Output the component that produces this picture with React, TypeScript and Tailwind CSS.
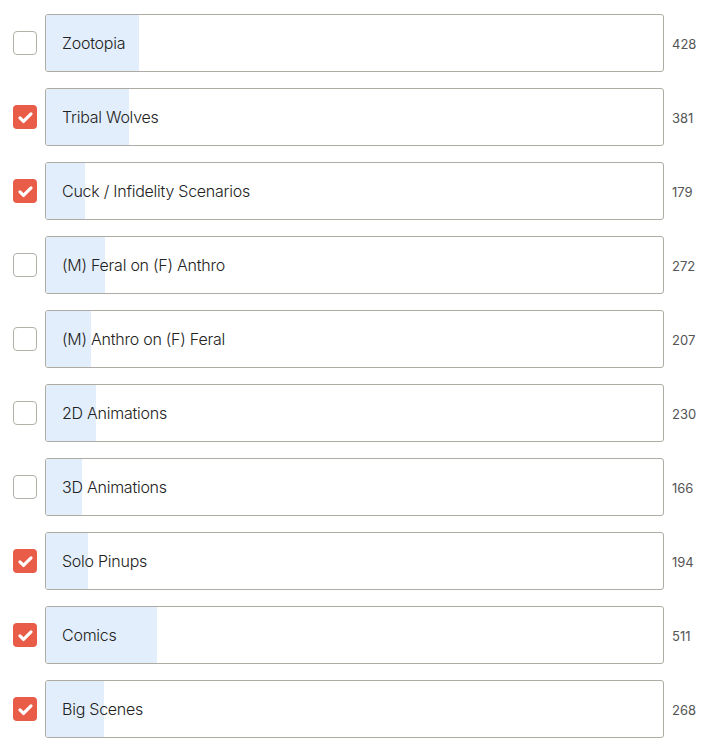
import { useState } from 'react'

type Option = {
  label: string
  count: number
  checked: boolean
}

const initialOptions: Option[] = [
  { label: 'Zootopia', count: 428, checked: false },
  { label: 'Tribal Wolves', count: 381, checked: true },
  { label: 'Cuck / Infidelity Scenarios', count: 179, checked: true },
  { label: '(M) Feral on (F) Anthro', count: 272, checked: false },
  { label: '(M) Anthro on (F) Feral', count: 207, checked: false },
  { label: '2D Animations', count: 230, checked: false },
  { label: '3D Animations', count: 166, checked: false },
  { label: 'Solo Pinups', count: 194, checked: true },
  { label: 'Comics', count: 511, checked: true },
  { label: 'Big Scenes', count: 268, checked: true },
]

function CheckBox({ checked, onClick }: { checked: boolean; onClick: () => void }) {
  return (
    <button
      type="button"
      onClick={onClick}
      className={
        checked
          ? 'size-6 shrink-0 rounded-[4px] bg-[#e95c48] flex items-center justify-center'
          : 'size-6 shrink-0 rounded-[4px] border border-[#b4b1aa] bg-white'
      }
    >
      {checked && (
        <svg viewBox="0 0 24 24" className="size-[19px]" fill="none">
          <path
            d="M5 12.5l4.5 4.5L19 7.5"
            stroke="white"
            strokeWidth="4"
            strokeLinecap="round"
            strokeLinejoin="round"
          />
        </svg>
      )}
    </button>
  )
}

export default function App() {
  const [options, setOptions] = useState(initialOptions)
  const total = options.reduce((sum, o) => sum + o.count, 0)

  const toggle = (idx: number) => {
    setOptions((prev) => prev.map((o, i) => (i === idx ? { ...o, checked: !o.checked } : o)))
  }

  return (
    <div
      className="bg-white w-[713px] h-[750px] pt-[14px] pl-[13px] flex flex-col gap-4"
      style={{ fontFamily: 'Inter, "Liberation Sans", sans-serif' }}
    >
      {options.map((o, i) => (
        <div key={o.label} className="flex items-center">
          <CheckBox checked={o.checked} onClick={() => toggle(i)} />
          <div className="ml-2 w-[619px] h-[58px] rounded-[3px] border border-[#aeaba4] relative overflow-hidden flex items-center">
            <div
              className="absolute left-0 top-0 bottom-0 bg-[#e2eefb]"
              style={{ width: `${(o.count / total) * 100}%` }}
            />
            <span className="relative pl-4 text-[16px] tracking-[-0.25px] font-light text-[#222222]">
              {o.label}
            </span>
          </div>
          <span className="ml-2 pt-[3px] text-[13px] text-[#555555]">{o.count}</span>
        </div>
      ))}
    </div>
  )
}
